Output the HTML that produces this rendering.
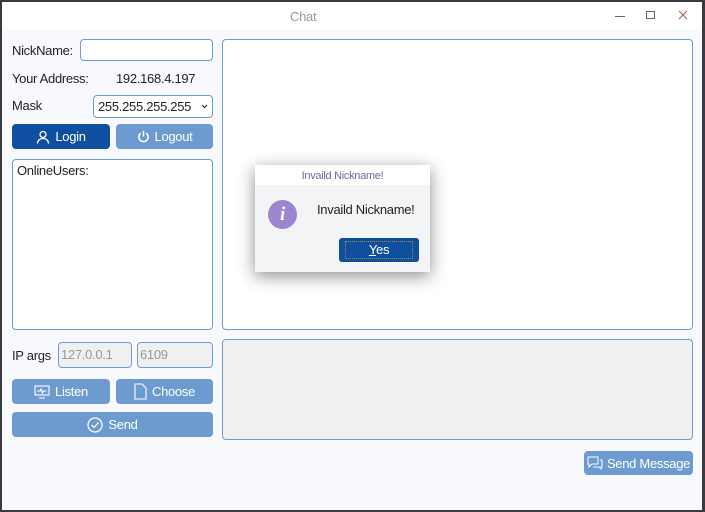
<!DOCTYPE html>
<html><head><meta charset="utf-8"><style>
*{margin:0;padding:0;box-sizing:border-box}
body{width:705px;height:512px;background:#3a3a40;position:relative;overflow:hidden;font-family:"Liberation Sans",sans-serif;font-size:13px;color:#222;letter-spacing:-0.3px}
.win{position:absolute;left:2px;top:2px;width:700px;height:508px;background:#f7f9fd}
.tb{position:absolute;left:0;top:0;width:700px;height:27px;background:#fff}
.a{position:absolute}
.in{position:absolute;border:1px solid #6e9bd0;border-radius:4px;background:#fff}
.btn{position:absolute;border-radius:4px;background:#6d9bd0;color:#fff;display:flex;align-items:center;justify-content:center;gap:5px;font-size:13px}
</style></head><body>
<div class="win">
<div class="tb">
<div class="a" style="left:288px;top:7px;color:#999;font-size:13px">Chat</div>
<div class="a" style="left:613px;top:14px;width:10px;height:1px;background:#666"></div>
<div class="a" style="left:644px;top:9px;width:9px;height:8px;border:1px solid #666"></div>
<svg class="a" style="left:676px;top:8px" width="10" height="10" viewBox="0 0 10 10" stroke="#a06060" stroke-width="1.1"><path d="M1 1l8 8M9 1l-8 8"/></svg>
</div>
<div class="a" style="left:10px;top:41px">NickName:</div>
<div class="in" style="left:78px;top:37px;width:133px;height:22px"></div>
<div class="a" style="left:10px;top:69px">Your Address:</div>
<div class="a" style="left:114px;top:69px">192.168.4.197</div>
<div class="a" style="left:10px;top:96px">Mask</div>
<div class="in" style="left:91px;top:93px;width:120px;height:23px;padding:3px 0 0 4px">255.255.255.255<svg style="position:absolute;right:4px;top:8px" width="7" height="5" viewBox="0 0 7 5" fill="none" stroke="#333" stroke-width="1.2"><path d="M1 1l2.5 2.5L6 1"/></svg></div>
<div class="btn" style="left:10px;top:122px;width:98px;height:25px;background:#0f4fa0"><svg width="14" height="14" viewBox="0 0 14 14" fill="none" stroke="#fff" stroke-width="1.3"><circle cx="7" cy="4.5" r="3"/><path d="M1.5 13.5c0-3 2.5-5 5.5-5s5.5 2 5.5 5"/></svg>Login</div>
<div class="btn" style="left:114px;top:122px;width:97px;height:25px"><svg width="13" height="13" viewBox="0 0 14 14" fill="none" stroke="#fff" stroke-width="1.6"><path d="M4 3.5a5 5 0 1 0 6 0"/><path d="M7 1v6"/></svg>Logout</div>
<div class="in" style="left:10px;top:157px;width:201px;height:171px;padding:3px 4px">OnlineUsers:</div>
<div class="in" style="left:220px;top:37px;width:471px;height:291px"></div>
<div class="a" style="left:10px;top:346px">IP args</div>
<div class="in" style="left:56px;top:340px;width:74px;height:26px;background:#f0f0f0;color:#999;padding:4px 2px">127.0.0.1</div>
<div class="in" style="left:135px;top:340px;width:76px;height:26px;background:#f0f0f0;color:#999;padding:4px 2px">6109</div>
<div class="in" style="left:220px;top:337px;width:471px;height:101px;background:#f0f0f0"></div>
<div class="btn" style="left:10px;top:377px;width:98px;height:25px"><svg width="16" height="14" viewBox="0 0 16 14" fill="none" stroke="#fff" stroke-width="1.1"><rect x="1" y="1" width="14" height="9"/><path d="M3 6h3l1-2 1.5 4 1-2h3M5 13h6"/></svg>Listen</div>
<div class="btn" style="left:114px;top:377px;width:97px;height:25px"><svg width="13" height="17" viewBox="0 0 13 17" fill="none" stroke="#fff" stroke-width="1.1"><path d="M1 1h7l4 4v11H1z"/></svg>Choose</div>
<div class="btn" style="left:10px;top:410px;width:201px;height:25px"><svg width="16" height="16" viewBox="0 0 16 16" fill="none" stroke="#fff" stroke-width="1.2"><circle cx="8" cy="8" r="7"/><path d="M4.5 8l2.5 2.5 4.5-5"/></svg>Send</div>
<div class="btn" style="left:582px;top:449px;width:109px;height:24px;gap:4px"><svg width="16" height="14" viewBox="0 0 16 14" fill="none" stroke="#fff" stroke-width="1"><path d="M1 1h10v7H5l-3 3V8H1z"/><path d="M13 4h2v7h-1v2l-2-2H6"/></svg>Send Message</div>
<div class="a" style="left:253px;top:163px;width:175px;height:107px;background:#f3f4f6;box-shadow:0 4px 16px rgba(0,0,0,.45)">
<div class="a" style="left:0;top:0;width:175px;height:20px;background:#fff;color:#6a6a9a;font-size:11px;text-align:center;padding-top:5px">Invaild Nickname!</div>
<div class="a" style="left:13px;top:35px;width:29px;height:29px;border-radius:50%;background:#9b86cf;color:#fff;font-family:'Liberation Serif',serif;font-style:italic;font-weight:bold;font-size:19px;text-align:center;line-height:29px">i</div>
<div class="a" style="left:62px;top:37px">Invaild Nickname!</div>
<div class="a" style="left:84px;top:73px;width:80px;height:24px;background:#0f4fa0;border-radius:3px;color:#fff;text-align:center;line-height:24px"><div style="position:absolute;left:6px;top:3px;right:6px;bottom:3px;border:1px dotted #b08040"></div><u>Y</u>es</div>
</div>
</div>
</body></html>
